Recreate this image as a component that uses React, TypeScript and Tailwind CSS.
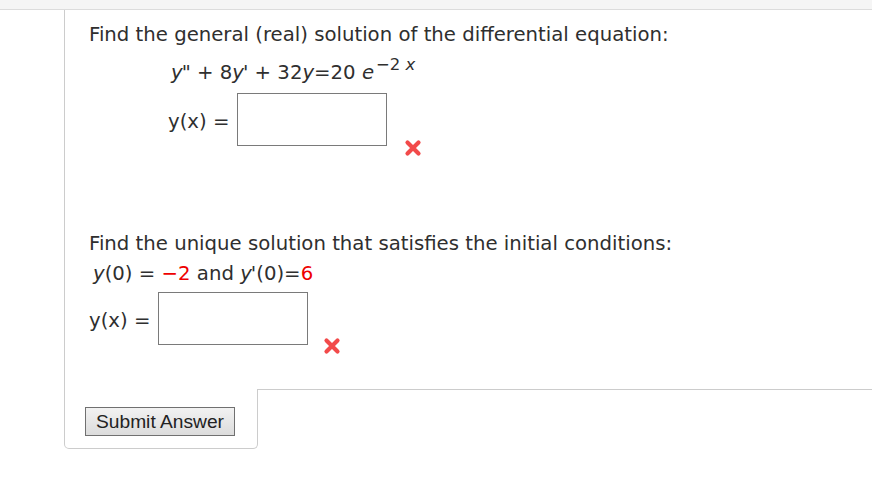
import React from 'react';

const WrongMark: React.FC<{ className?: string }> = ({ className }) => (
  <svg viewBox="0 0 20 20" className={className} aria-hidden="true">
    <path d="M4.5 4.5 L15.5 15.5 M15.5 4.5 L4.5 15.5" stroke="#f24a4a" strokeWidth="4.2" strokeLinecap="round" />
  </svg>
);

const AnswerRow: React.FC<{ indent: string; markClass: string }> = ({ indent, markClass }) => (
  <div className={`flex items-start ${indent}`}>
    <span className="mt-[19px] mr-[8px]">y(x) =</span>
    <input
      type="text"
      aria-label="y(x)"
      className="w-[150px] h-[53px] border border-[#7a7a7a] bg-white outline-none"
    />
    <WrongMark className={markClass} />
  </div>
);

export default function App() {
  return (
    <div className="min-h-screen bg-white text-[#2f2f2f] font-['DejaVu_Sans',Verdana,sans-serif] text-[19.7px] leading-none">
      <div className="h-[10px] bg-[#f5f5f5] border-b border-[#dcdcdc]" />
      <div className="ml-[64px] border-l border-[#cccccc] pl-[24px] pt-[15px] pb-[33px]">
        <p className="h-[20px]">Find the general (real) solution of the differential equation:</p>
        <p className="mt-[18px] ml-[82px] h-[22px]">
          <i>y</i><i className="-ml-[1px]">"</i> + 8<i>y</i><i className="-ml-[1px]">'</i> + 32<i>y</i>=20 <i>e</i>
          <sup className="text-[16.5px] ml-[2px] relative top-[-9px]">−2 <i>x</i></sup>
        </p>
        <div className="mt-[8px]">
          <AnswerRow indent="ml-[79px]" markClass="w-[20px] h-[20px] ml-[16px] mt-[45px]" />
        </div>

        <p className="mt-[76px] h-[20px]">Find the unique solution that satisfies the initial conditions:</p>
        <p className="mt-[10px] ml-[4px] h-[20px]">
          <i>y</i>(0) = <span className="text-[#ee0000]">−2</span> and <i>y</i><i className="-ml-[1px]">'</i>(0)=<span className="text-[#ee0000]">6</span>
        </p>
        <div className="mt-[8px]">
          <AnswerRow indent="" markClass="w-[20px] h-[20px] ml-[14px] mt-[44px]" />
        </div>
      </div>
      <div className="flex ml-[64px]">
        <div className="w-[194px] h-[60px] border-l border-r border-b border-[#cccccc] rounded-b-[5px] pl-[20px] pt-[18px]">
          <button
            type="button"
            className="h-[29px] px-[10px] border border-[#707070] bg-gradient-to-b from-[#f2f2f2] to-[#dcdcdc] font-['Liberation_Sans',Arial,sans-serif] text-[19.2px] text-[#222] leading-none"
          >
            Submit Answer
          </button>
        </div>
        <div className="flex-1 border-t border-[#cccccc]" />
      </div>
    </div>
  );
}
